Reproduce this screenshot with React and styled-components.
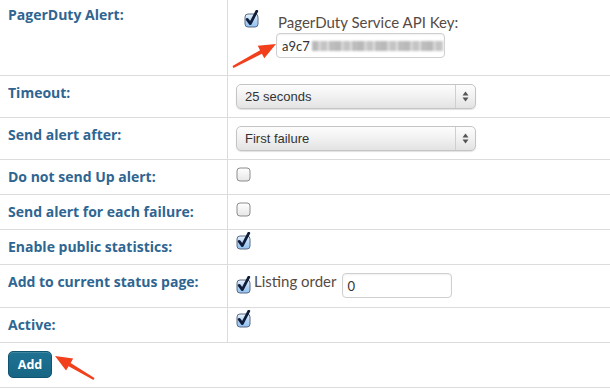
import React from "react";
import styled, { createGlobalStyle } from "styled-components";

const Global = createGlobalStyle`
  html, body { margin: 0; padding: 0; background: #fff; }
  body { font-family: Lato, "Open Sans", sans-serif; }
`;

const Form = styled.div`
  position: relative;
  width: 610px;
  height: 389px;
  overflow: hidden;
`;

const Row = styled.div`
  display: grid;
  grid-template-columns: 228px 1fr;
  box-sizing: border-box;
  height: ${(p) => p.$h}px;
  border-bottom: 1px solid #dcdcdc;
`;

const Label = styled.div`
  box-sizing: border-box;
  padding: ${(p) => (p.$top ?? 8)}px 8px 0;
  border-right: 1px solid #dcdcdc;
  font-family: "Open Sans", sans-serif;
  font-weight: 700;
  font-size: 14px;
  line-height: 17px;
  color: #2f6591;
`;

const Value = styled.div`
  box-sizing: border-box;
  padding: ${(p) => (p.$top ?? 8)}px 0 0 ${(p) => (p.$left ?? 8)}px;
  display: flex;
  align-items: flex-start;
`;

const Full = styled.div`
  grid-column: 1 / span 2;
  padding: 8px 8px 0;
`;

const KeyGroup = styled.div`
  display: flex;
  flex-direction: column;
  margin-left: 16px;
`;

const FieldLabel = styled.span`
  font-family: Lato, sans-serif;
  font-size: 15px;
  line-height: 18px;
  color: #564b44;
  padding-left: ${(p) => p.$indent ?? 0}px;
  margin-top: ${(p) => p.$mt ?? 0}px;
`;

const TextInput = styled.div`
  box-sizing: border-box;
  width: ${(p) => p.$w}px;
  height: 25px;
  margin-top: ${(p) => p.$mt ?? 0}px;
  margin-left: ${(p) => p.$ml ?? 0}px;
  border: 1px solid #cfcfcf;
  border-radius: 4px;
  background: #fff;
  box-shadow: inset 0 1px 2px rgba(0, 0, 0, 0.06);
  display: flex;
  align-items: center;
  padding-left: 5px;
  font-family: Lato, sans-serif;
  font-size: 13px;
  color: #333;
`;

const Blurred = styled.span`
  display: inline-block;
  width: 136px;
  height: 10px;
  margin-left: 2px;
  filter: blur(1.2px);
  background: repeating-linear-gradient(
    90deg,
    #b9b9b9 0 6px,
    #d6d6d6 6px 9px,
    #c4c4c4 9px 15px,
    #e0e0e0 15px 17px,
    #bdbdbd 17px 23px
  );
`;

const Select = styled.div`
  box-sizing: border-box;
  width: 240px;
  height: 25px;
  border: 1px solid #c4c4c4;
  border-radius: 5px;
  background: linear-gradient(#fdfdfd, #f1f1f1 50%, #e3e3e3);
  box-shadow: 0 1px 1px rgba(0, 0, 0, 0.12);
  display: flex;
  align-items: stretch;
  font-family: "Liberation Sans", Arial, sans-serif;
  font-size: 13px;
  color: #333;
`;

const SelectText = styled.span`
  flex: 1;
  display: flex;
  align-items: center;
  padding-left: 8px;
`;

const SelectArrows = styled.span`
  width: 19px;
  border-left: 1px solid #cfcfcf;
  display: flex;
  align-items: center;
  justify-content: center;
`;

const BoxWrap = styled.span`
  display: inline-block;
  width: 16px;
  height: 18px;
  margin-top: ${(p) => p.$mt ?? 0}px;
  flex: none;
`;

const Button = styled.button`
  box-sizing: border-box;
  width: 44px;
  height: 27px;
  border: 1px solid #0f5470;
  border-radius: 5px;
  background: linear-gradient(#1f7293, #176585);
  color: #fff;
  font-family: "Open Sans", sans-serif;
  font-weight: 700;
  font-size: 12.5px;
  padding: 0;
  box-shadow: inset 0 1px 0 rgba(255, 255, 255, 0.15);
`;

const Overlay = styled.svg`
  position: absolute;
  left: 0;
  top: 0;
  pointer-events: none;
`;

function Checkbox({ checked, mt }) {
  return (
    <BoxWrap $mt={mt}>
      <svg width="16" height="18" viewBox="0 0 16 18">
        <defs>
          <linearGradient id="cbOn" x1="0" y1="0" x2="0" y2="1">
            <stop offset="0" stopColor="#e9f3fd" />
            <stop offset="0.5" stopColor="#b5d5f6" />
            <stop offset="1" stopColor="#8fc0f0" />
          </linearGradient>
          <linearGradient id="cbOff" x1="0" y1="0" x2="0" y2="1">
            <stop offset="0" stopColor="#ffffff" />
            <stop offset="1" stopColor="#e6e6e6" />
          </linearGradient>
        </defs>
        <rect
          x="1"
          y="4"
          width="13"
          height="13"
          rx="3"
          fill={checked ? "url(#cbOn)" : "url(#cbOff)"}
          stroke={checked ? "#5a6a86" : "#8c8c8c"}
          strokeWidth="1"
        />
        {checked && (
          <path
            d="M3.2 9.4 L6.3 13.6 L12.8 1.2"
            fill="none"
            stroke="#0f1d3a"
            strokeWidth="2.8"
            strokeLinecap="round"
            strokeLinejoin="round"
          />
        )}
      </svg>
    </BoxWrap>
  );
}

function Arrows() {
  return (
    <svg width="7" height="11" viewBox="0 0 7 11">
      <path d="M3.5 0.5 L6.5 4.5 L0.5 4.5 Z" fill="#555" />
      <path d="M3.5 10.5 L6.5 6.5 L0.5 6.5 Z" fill="#555" />
    </svg>
  );
}

function SelectBox({ children }) {
  return (
    <Select>
      <SelectText>{children}</SelectText>
      <SelectArrows>
        <Arrows />
      </SelectArrows>
    </Select>
  );
}

export default function App() {
  return (
    <Form>
      <Global />
      <Row $h={76}>
        <Label $top={6}>PagerDuty Alert:</Label>
        <Value $left={16} $top={4}>
          <Checkbox checked mt={6} />
          <KeyGroup>
            <FieldLabel $indent={2} $mt={9}>PagerDuty Service API Key:</FieldLabel>
            <TextInput $w={169} $mt={2}>
              a9c7<Blurred />
            </TextInput>
          </KeyGroup>
        </Value>
      </Row>
      <Row $h={42}>
        <Label>Timeout:</Label>
        <Value>
          <SelectBox>25 seconds</SelectBox>
        </Value>
      </Row>
      <Row $h={42}>
        <Label>Send alert after:</Label>
        <Value>
          <SelectBox>First failure</SelectBox>
        </Value>
      </Row>
      <Row $h={35}>
        <Label>Do not send Up alert:</Label>
        <Value $top={4}>
          <Checkbox />
        </Value>
      </Row>
      <Row $h={35}>
        <Label>Send alert for each failure:</Label>
        <Value $top={4}>
          <Checkbox />
        </Value>
      </Row>
      <Row $h={35}>
        <Label>Enable public statistics:</Label>
        <Value $top={2}>
          <Checkbox checked />
        </Value>
      </Row>
      <Row $h={43}>
        <Label>Add to current status page:</Label>
        <Value $top={8}>
          <Checkbox checked mt={3} />
          <FieldLabel $indent={2} $mt={-1}>Listing order</FieldLabel>
          <TextInput $w={110} $ml={5}>0</TextInput>
        </Value>
      </Row>
      <Row $h={35}>
        <Label>Active:</Label>
        <Value $top={2}>
          <Checkbox checked />
        </Value>
      </Row>
      <Row $h={45}>
        <Full>
          <Button>Add</Button>
        </Full>
      </Row>
      <Overlay width="610" height="389" viewBox="0 0 610 389">
        <polygon
          points="233.5,67.9 261.9,53.8 264.3,58.2 276,44 257.7,45.8 260.1,50.2 232.5,66.1"
          fill="#f2401c"
        />
        <polygon
          points="94.5,378.1 70.6,362.9 73.2,358.6 55,356 66.0,370.6 68.6,366.3 93.5,379.9"
          fill="#f2401c"
        />
      </Overlay>
    </Form>
  );
}
